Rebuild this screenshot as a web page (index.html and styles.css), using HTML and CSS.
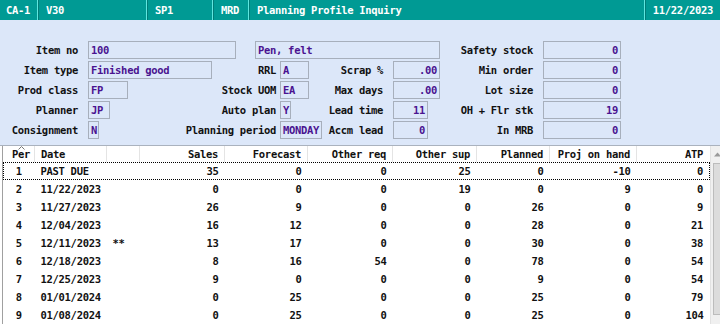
FILE: index.html
```html
<!DOCTYPE html>
<html lang="en">
<head>
    <meta charset="utf-8" />
    <meta content="width=device-width, initial-scale=1.0" name="viewport" />
    <title>Planning Profile Inquiry</title>
    <link rel="stylesheet" href="styles.css">
</head>
<body>
    <div class="screen">
        <div class="titlebar">
            <div class="tcell c-co">CA-1</div>
            <div class="tcell c-ver">V30</div>
            <div class="tcell c-sp">SP1</div>
            <div class="tcell c-mod">MRD</div>
            <div class="tcell c-name">Planning Profile Inquiry</div>
            <div class="tcell c-date">11/22/2023</div>
        </div>

        <div class="form">
            <div class="lbl1">Item no</div>
            <div class="zone span3">
                <span class="fld w148">100</span>
                <span class="fld w185 gap19">Pen, felt</span>
                <span class="lbl pr10">Safety stock</span>
            </div>
            <div class="zone"><span class="fld w78 num">0</span></div>

            <div class="lbl1">Item type</div>
            <div class="zone z2"><span class="fld w124">Finished good</span><span class="lbl">RRL</span></div>
            <div class="zone z3"><span class="fld w29">A</span><span class="lbl">Scrap %</span></div>
            <div class="zone z4"><span class="fld w47 num">.00</span><span class="lbl">Min order</span></div>
            <div class="zone"><span class="fld w78 num">0</span></div>

            <div class="lbl1">Prod class</div>
            <div class="zone z2"><span class="fld w40">FP</span><span class="lbl">Stock UOM</span></div>
            <div class="zone z3"><span class="fld w29">EA</span><span class="lbl">Max days</span></div>
            <div class="zone z4"><span class="fld w47 num">.00</span><span class="lbl">Lot size</span></div>
            <div class="zone"><span class="fld w78 num">0</span></div>

            <div class="lbl1">Planner</div>
            <div class="zone z2"><span class="fld w22">JP</span><span class="lbl">Auto plan</span></div>
            <div class="zone z3"><span class="fld w11">Y</span><span class="lbl">Lead time</span></div>
            <div class="zone z4"><span class="fld w35 num">11</span><span class="lbl">OH + Flr stk</span></div>
            <div class="zone"><span class="fld w78 num">19</span></div>

            <div class="lbl1">Consignment</div>
            <div class="zone z2"><span class="fld w11">N</span><span class="lbl">Planning period</span></div>
            <div class="zone z3"><span class="fld w42">MONDAY</span><span class="lbl">Accm lead</span></div>
            <div class="zone z4"><span class="fld w35 num">0</span><span class="lbl">In MRB</span></div>
            <div class="zone"><span class="fld w78 num">0</span></div>
        </div>

        <div class="grid-wrap">
            <table class="grid">
                <colgroup>
                    <col class="col-per"><col class="col-date"><col class="col-mark">
                    <col class="col-85"><col class="col-83"><col class="col-85"><col class="col-84">
                    <col class="col-73"><col class="col-87"><col class="col-73">
                </colgroup>
                <thead>
                    <tr>
                        <th class="per-h">Per<svg class="sort" width="7" height="4" viewBox="0 0 7 4"><path d="M0.5 3.5 L3.5 0.5 L6.5 3.5" fill="none" stroke="#777" stroke-width="1"/></svg></th>
                        <th class="left">Date</th>
                        <th></th>
                        <th>Sales</th>
                        <th>Forecast</th>
                        <th>Other req</th>
                        <th>Other sup</th>
                        <th>Planned</th>
                        <th>Proj on hand</th>
                        <th>ATP</th>
                    </tr>
                </thead>
                <tbody>
                    <tr class="focus"><td class="per">1</td><td class="left">PAST DUE</td><td></td><td>35</td><td>0</td><td>0</td><td>25</td><td>0</td><td>-10</td><td>0</td></tr>
                    <tr><td class="per">2</td><td class="left">11/22/2023</td><td></td><td>0</td><td>0</td><td>0</td><td>19</td><td>0</td><td>9</td><td>0</td></tr>
                    <tr><td class="per">3</td><td class="left">11/27/2023</td><td></td><td>26</td><td>9</td><td>0</td><td>0</td><td>26</td><td>0</td><td>9</td></tr>
                    <tr><td class="per">4</td><td class="left">12/04/2023</td><td></td><td>16</td><td>12</td><td>0</td><td>0</td><td>28</td><td>0</td><td>21</td></tr>
                    <tr><td class="per">5</td><td class="left">12/11/2023</td><td class="left">**</td><td>13</td><td>17</td><td>0</td><td>0</td><td>30</td><td>0</td><td>38</td></tr>
                    <tr><td class="per">6</td><td class="left">12/18/2023</td><td></td><td>8</td><td>16</td><td>54</td><td>0</td><td>78</td><td>0</td><td>54</td></tr>
                    <tr><td class="per">7</td><td class="left">12/25/2023</td><td></td><td>9</td><td>0</td><td>0</td><td>0</td><td>9</td><td>0</td><td>54</td></tr>
                    <tr><td class="per">8</td><td class="left">01/01/2024</td><td></td><td>0</td><td>25</td><td>0</td><td>0</td><td>25</td><td>0</td><td>79</td></tr>
                    <tr><td class="per">9</td><td class="left">01/08/2024</td><td></td><td>0</td><td>25</td><td>0</td><td>0</td><td>25</td><td>0</td><td>104</td></tr>
                </tbody>
            </table>
            <div class="scrollbar">
                <svg class="arrow" width="7" height="5" viewBox="0 0 7 5"><path d="M0 4.5 L3.5 0.5 L7 4.5 Z" fill="#9a9a9a"/></svg>
                <div class="thumb"></div>
            </div>
        </div>
    </div>
</body>
</html>
```

FILE: styles.css
```css
/* green-screen style inquiry panel, 720x324 */
body {
    margin: 0;
    font-family: "DejaVu Sans Mono", "Liberation Mono", monospace;
    font-size: 10.5px;
    font-weight: bold;
    letter-spacing: -0.3px;
    color: #111;
}

.screen {
    width: 720px;
    height: 324px;
    overflow: hidden;
    background: #dce7f9;
    display: flex;
    flex-direction: column;
}

/* title bar */
.titlebar {
    display: flex;
    height: 20px;
    background: #009a94;
    color: #fff;
    flex: none;
}

.tcell {
    line-height: 20px;
    padding-left: 8px;
    box-sizing: border-box;
    white-space: nowrap;
}

.tcell + .tcell {
    border-left: 1px solid #5fe6df;
    box-shadow: inset 1px 0 0 #007c77;
}

.c-co { width: 37px; padding-left: 6px; }
.c-ver { width: 109px; }
.c-sp { width: 66px; }
.c-mod { width: 36px; }
.c-name { width: 396px; }
.c-date { flex: 1; text-align: right; padding-right: 7px; }

/* header form */
.form {
    display: grid;
    grid-template-columns: 88px 192px 113px 150px 78px;
    grid-auto-rows: 18px;
    row-gap: 2px;
    padding-top: 21px;
    height: 125px;
    box-sizing: border-box;
    flex: none;
}

.lbl1 {
    text-align: right;
    padding-right: 10px;
    line-height: 18px;
    white-space: nowrap;
}

.zone {
    display: flex;
    align-items: stretch;
    white-space: nowrap;
}

.span3 { grid-column: span 3; }

.lbl {
    margin-left: auto;
    line-height: 18px;
}

.z2 .lbl { padding-right: 4px; }
.z3 .lbl { padding-right: 10px; }
.z4 .lbl, .pr10 { padding-right: 10px; }

.fld {
    box-sizing: border-box;
    height: 18px;
    line-height: 16px;
    border: 1px solid #a7afbc;
    padding: 0 2px;
    color: #4a1390;
    overflow: hidden;
    flex: none;
}

.num { text-align: right; }

.gap19 { margin-left: 19px; }
.w11 { width: 11px; }
.w22 { width: 22px; }
.w29 { width: 29px; }
.w35 { width: 35px; }
.w40 { width: 40px; }
.w42 { width: 42px; }
.w47 { width: 47px; }
.w78 { width: 78px; }
.w124 { width: 124px; }
.w148 { width: 148px; }
.w185 { width: 185px; }

/* period grid */
.grid-wrap {
    flex: 1;
    display: flex;
    background: #fff;
    border-top: 1px solid #aab2be;
    padding-left: 2px;
}

.grid {
    width: 708px;
    table-layout: fixed;
    border-collapse: collapse;
    border-left: 1px solid #a0a0a0;
    flex: none;
    align-self: flex-start;
}

.col-per { width: 32px; }
.col-date { width: 72px; }
.col-mark { width: 33px; }
.col-85 { width: 85px; }
.col-83 { width: 83px; }
.col-84 { width: 84px; }
.col-73 { width: 73px; }
.col-87 { width: 87px; }

.grid th,
.grid td {
    padding: 0 6px 0 0;
    text-align: right;
    white-space: nowrap;
    overflow: hidden;
}

.grid th {
    height: 16px;
    font-weight: bold;
    border-right: 1px solid #e4e4e4;
    line-height: 16px;
}

.grid th:last-child { border-right: none; }

.grid td {
    height: 18px;
    line-height: 18px;
}

.grid .left {
    text-align: left;
    padding-left: 6px;
}

.grid .per {
    text-align: center;
    padding: 0;
}

.per-h {
    position: relative;
    text-align: left !important;
    padding-left: 9px !important;
}

.sort {
    position: absolute;
    left: 15px;
    top: 0;
}

.focus {
    outline: 1px dotted #000;
    outline-offset: -1px;
}

.scrollbar {
    flex: 1;
    background: #f0f0f0;
    border-left: 1px solid #e2e2e2;
}

.scrollbar .arrow {
    display: block;
    margin: 6px 0 0 3px;
}

.thumb {
    margin: 6px 0 0 2px;
    height: 150px;
    background: #dcdcdc;
    border: 1px solid #bcbcbc;
    border-right: none;
}
```
